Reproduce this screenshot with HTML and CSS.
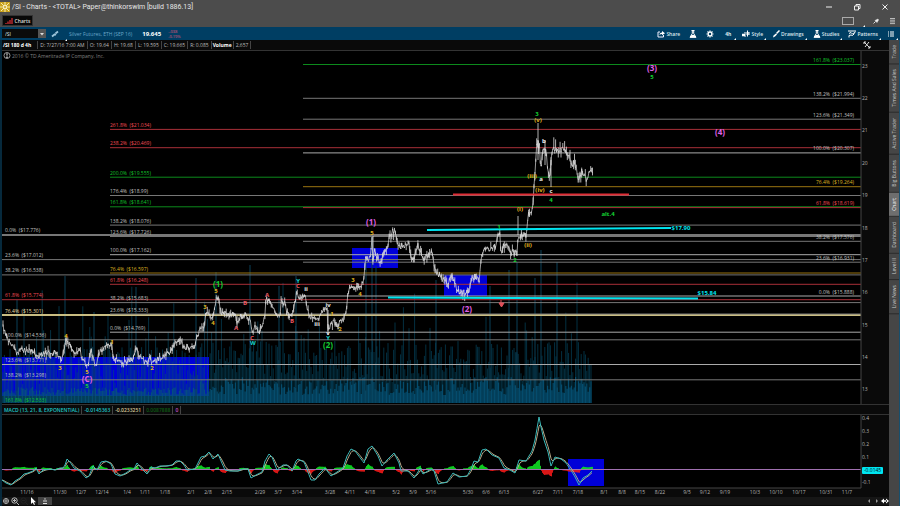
FILE: index.html
```html
<!DOCTYPE html>
<html lang="en">
<head>
<meta charset="utf-8">
<title>/SI - Charts</title>
<link rel="stylesheet" href="styles.css">
</head>
<body>
<header class="window-head">
  <div class="titlebar">
    <svg class="logo" viewBox="0 0 10 10"><rect width="10" height="10" fill="#c9a21e"/><g stroke="#f3e9b0" stroke-width="1"><path d="M5 0v10M0 5h10M1 1l8 8M9 1L1 9"/></g><circle cx="5" cy="5" r="2" fill="#f6efc4"/><circle cx="5" cy="5" r="1" fill="#c9a21e"/></svg>
    <h1>/SI - Charts - &lt;TOTAL&gt; Paper@thinkorswim [build 1886.13]</h1>
    <div class="window-buttons">
      <button aria-label="Minimize"><svg viewBox="0 0 8 8"><path d="M1 4h6"/></svg></button>
      <button aria-label="Restore"><svg viewBox="0 0 8 8"><path d="M1.500 3h4v4h-4zM3 3V1.500h4v4H5.500"/></svg></button>
      <button aria-label="Close"><svg viewBox="0 0 8 8"><path d="M1.500 1.500l5 5M6.500 1.500l-5 5"/></svg></button>
    </div>
  </div>
  <div class="tabbar">
    <button class="tab"><svg viewBox="0 0 8 8"><path d="M1 7V6M3 7V4.500M5 7V3M7 7V1" stroke="#c22a30" stroke-width="1.400"/></svg>Charts</button>
    <div class="tab-tools">
      <button class="frame more" aria-label="Layout"></button>
      <button aria-label="Pin"><svg viewBox="0 0 8 8"><path d="M1.500 6.500l2-2" stroke="#ddd"/><path d="M3 3.500L6 2l.5 1L5 5.500z" fill="#eee" stroke="#eee" stroke-width=".5"/></svg></button>
      <button aria-label="Panel menu"><svg viewBox="0 0 8 8"><path d="M2 1.500h5M2 3.200h5M2 4.900h5M2 6.600h5" stroke="#bbb"/></svg></button>
    </div>
  </div>
</header>
<nav class="toolbar">
  <div class="symbol"><input aria-label="Symbol" value="/SI"><button aria-label="Symbol list"><svg viewBox="0 0 8 8"><path d="M2 3h4L4 5.500z" fill="#ddd"/></svg></button></div>
  <button class="link more" aria-label="Link"><svg viewBox="0 0 8 8"><path d="M1 6.500l2.500-2M3 4l2 1M4.500 3.500L7 1.500" stroke="#9cc4da" stroke-width="1.800"/></svg></button>
  <span class="product">Silver Futures, ETH (SEP 16)</span>
  <strong class="last">19.645</strong>
  <span class="change"><span>-.038</span><span>-0.19%</span></span>
  <div class="actions">
    <button><svg viewBox="0 0 8 8"><path d="M3 2H1v5h5.500V5" stroke="#eef"/><path d="M2.500 5q0-2.500 2.500-2.500V1L8 3.200 5 5.300V4Q3.500 4 2.500 5z" fill="#fff"/></svg>Share</button>
    <button aria-label="Analyze"><svg viewBox="0 0 8 8"><path d="M2.500.5h3M3.300.5v3L1 7.300h6L4.700 3.500v-3" stroke="#fff"/><path d="M2.500 5h3L7 7.500H1z" fill="#fff"/></svg></button>
    <button aria-label="Settings"><svg viewBox="0 0 8 8"><path d="M4 .5v7M.5 4h7M1.500 1.500l5 5M6.500 1.500l-5 5" stroke="#fff" stroke-width="1.200"/><circle cx="4" cy="4" r="2.400" fill="#fff"/><circle cx="4" cy="4" r="1.200" fill="#003e63"/></svg></button>
    <button class="more period">4h</button>
    <button class="more"><svg viewBox="0 0 8 8"><path d="M1 3.500v3M3 2v5M5.500.5v6M7 2v3" stroke="#fff"/><path d="M4.500 2h2v3h-2zM0 4h3v2H0z" fill="#fff"/></svg>Style</button>
    <button class="more"><svg viewBox="0 0 8 8"><path d="M1 7.500l.5-2 2.500-2L5 4.500 3 6.500z" fill="#fff"/><path d="M4.500 3.500L7.500.5" stroke="#fff" stroke-width="1.500"/></svg>Drawings</button>
    <button class="more"><svg viewBox="0 0 8 8"><path d="M2.500.5h3M3.300.5v3L1 7.300h6L4.700 3.500v-3" stroke="#fff"/><path d="M2.500 5h3L7 7.500H1z" fill="#fff"/></svg>Studies</button>
    <button class="more"><svg viewBox="0 0 8 8"><path d="M0 1h8M1 3.500l2-1 1.500 1.500L7.500 2M1 7.500V5.500l2-.5 1.500.5 2-2" stroke="#fff"/></svg>Patterns</button>
    <button class="more" aria-label="Menu"><svg viewBox="0 0 8 8"><path d="M1 2h1M3 2h4M1 4h1M3 4h4M1 6h1M3 6h4" stroke="#fff"/></svg></button>
  </div>
</nav>
<div class="workspace">
  <main class="charts">
    <div class="strip">
      <b>/SI 180 d 4h</b><span>D: 7/27/16 7:00 AM</span><span>O: 19.64</span><span>H: 19.68</span><span>L: 19.595</span><span>C: 19.665</span><span>R: 0.085</span><b class="vol">Volume</b><span>2,657</span>
      <button class="scale" aria-label="Scale"><svg viewBox="0 0 8 8"><path d="M1 1l6 6M1 1h2M1 1v2M7 7V5M7 7H5M6 1L2 6" stroke="#ddd"/></svg></button>
    </div>
    <svg class="plot" id="price" viewBox="2 51 887 353" role="img" aria-label="Price chart"></svg>
    <div class="strip study">
      <span class="macd">MACD (13, 21, 8, EXPONENTIAL)</span><span class="macd">-0.0145363</span><span class="signal">-0.0233251</span><span class="diff">0.0087888</span><span class="zero">0</span>
    </div>
    <svg class="plot" id="macd" viewBox="2 415 887 82" role="img" aria-label="MACD study"></svg>
    <footer class="bottom">
      <button aria-label="Crosshair"><svg viewBox="0 0 8 8"><circle cx="4" cy="4" r="2.500" stroke="#aaa"/><path d="M4 1v6M1 4h6" stroke="#aaa"/></svg></button>
      <button aria-label="Zoom in"><svg viewBox="0 0 8 8"><circle cx="3.500" cy="3.500" r="2.700" stroke="#bbb"/><path d="M5.500 5.500L8 8M2 3.500h3M3.500 2v3" stroke="#bbb"/></svg></button>
      <button aria-label="Zoom out"><svg viewBox="0 0 8 8"><circle cx="3.500" cy="3.500" r="2.700" stroke="#222"/><path d="M5.500 5.500L8 8M2 3.500h3" stroke="#222"/></svg></button>
      <button aria-label="Pointer"><svg viewBox="0 0 8 8"><path d="M2 0v7l1.700-1.500L5 8l1-.5-1.200-2.300H7z" fill="#fff"/></svg></button>
      <button class="fit" aria-label="Fit"><svg viewBox="0 0 8 8"><path d="M2 4h4M2 6.500h4" stroke="#ddd"/><path d="M3 1.500h2L4 3z" fill="#ddd"/></svg></button>
      <div class="scroll">
        <button aria-label="Scroll left"><svg viewBox="0 0 8 8"><path d="M5 2L3 4l2 2z" fill="#999"/></svg></button>
        <button aria-label="Scroll right"><svg viewBox="0 0 8 8"><path d="M3 2l2 2-2 2z" fill="#999"/></svg></button>
        <button aria-label="Expand"><svg viewBox="0 0 8 8"><path d="M0 4l3-2.500v5zM8 4L5 1.500v5zM2 3.300h4v1.400H2z" fill="#fff"/></svg></button>
      </div>
    </footer>
  </main>
  <aside class="gadgets">
    <button>Trade</button><button>Times And Sales</button><button>Active Trader</button><button>Big Buttons</button><button class="on">Chart</button><button>Dashboard</button><button>Level II</button><button>Live News</button>
  </aside>
</div>
<script src="chart.js"></script>
</body>
</html>
```
FILE: styles.css
```css
* { box-sizing: border-box; }
body {
  margin: 0;
  min-height: 100vh;
  display: flex;
  flex-direction: column;
  background: #0a0a0a;
  color: #bcbcbc;
  font: 5px/8px "Open Sans", "Noto Sans", sans-serif;
}
button, input { font: inherit; color: inherit; background: none; border: 0; padding: 0; margin: 0; }
button { display: flex; align-items: center; justify-content: center; white-space: nowrap; }
button svg { width: 8px; height: 8px; fill: none; }

.window-head { background: #4c4c4c; }
.titlebar { display: flex; align-items: center; height: 14px; gap: 2px; }
.logo { width: 10px; height: 10px; }
.titlebar h1 { margin: 0; font-family: Roboto, "Open Sans", sans-serif; font-size: 7px; line-height: 14px; font-weight: 400; color: #e6e6e6; }
.window-buttons { margin-left: auto; display: flex; gap: 20px; padding-right: 11px; }
.window-buttons svg { stroke: #eee; stroke-width: 1; }
.tabbar { display: flex; height: 13px; align-items: center; justify-content: space-between; padding: 0 4px 0 2px; }
.tab { background: #080808; color: #ddd; height: 11px; width: 31px; gap: 2px; font-weight: 600; border: 1px solid #333; }
.tab-tools { display: flex; align-items: center; gap: 8px; }
.frame { width: 12px; height: 8px; border: 1px solid #aaa; margin-right: 10px; }

.toolbar { display: flex; align-items: center; height: 13px; padding: 0 5px 0 2px; background: #003e63; color: #dbe6ec; }
.symbol { display: flex; height: 9px; width: 44px; background: #0b0b0b; }
.symbol input { flex: 1; min-width: 0; padding-left: 3px; }
.symbol button { background: #555; width: 8px; }
.link { width: 18px; height: 13px; }
.more { position: relative; }
.more::after { content: ""; position: absolute; right: -3px; bottom: -1px; border: 1px solid; border-color: transparent #fff #fff transparent; }
.frame.more::after { right: -12px; bottom: -3px; }
.product { color: #6aa6c8; margin: 0 10px 0 5px; }
.last { font-size: 6px; color: #fff; }
.change { display: flex; flex-direction: column; color: #e0587a; margin-left: 7px; line-height: 5px; font-size: 4px; }
.actions { margin-left: auto; display: flex; align-items: center; font-weight: 600; gap: 9px; }
.actions button { gap: 1px; height: 11px; }
.actions .period { padding: 0 2px; font-weight: 700; }

.workspace { flex: 1; display: flex; }
.charts { flex: 1; min-width: 0; border-left: 2px solid #06293c; }
.strip { display: flex; align-items: center; height: 11px; border-bottom: 1px solid #333; background: #0a0a0a; }
.strip b, .strip span { padding: 0 2px; border-right: 1px solid #444; }
.strip b { color: #fff; padding-left: 1px; }
.strip b:first-child { padding-right: 6px; }
.strip .vol { padding-right: 1px; }
.scale { margin-left: auto; margin-right: 18px; }
.study { border-top: 1px solid #333; font-weight: 600; }
.strip .macd { color: #1fc9c9; }
.strip .signal { color: #d8cc9a; }
.strip .diff { color: #0d5a14; }
.strip .zero { color: #c04fc8; }
.plot { display: block; width: 100%; height: auto; font-size: 5px; }
.plot .mark { font-weight: 700; font-size: 6px; text-anchor: middle; }
.plot .big { font-size: 8px; }
.plot .mid { text-anchor: middle; }
.plot .end { text-anchor: end; }
.bottom { display: flex; align-items: center; height: 8px; background: #161616; gap: 1px; }
.fit { background: #444; width: 14px; height: 8px; }
.scroll { margin-left: auto; display: flex; }

.gadgets { width: 11px; background: #464646; border-right: 1px solid #17506e; display: flex; flex-direction: column; }
.gadgets button { writing-mode: vertical-rl; transform: rotate(180deg); width: 10px; padding: 5px 0; line-height: 10px; color: #ccc; border-top: 1px solid #2b2b2b; }
.gadgets .on { background: #6e6e6e; color: #fff; }
```
FILE: chart.js
```js
const NS = 'http://www.w3.org/2000/svg';
const price = document.getElementById('price');
const macd = document.getElementById('macd');

function add(root, name, attrs, text) {
  const el = document.createElementNS(NS, name);
  for (const k in attrs) el.setAttribute(k, attrs[k]);
  if (text) el.textContent = text;
  root.appendChild(el);
}
let seed = 11;
function rnd() { seed = (seed * 16807) % 2147483647; return seed / 2147483647; }
function pairs(s) { return s.trim().split(/\s+/).map(p => p.split(',').map(Number)); }
function at(pts, x) {
  if (x <= pts[0][0]) return pts[0][1];
  for (let i = 1; i < pts.length; i++) {
    if (x <= pts[i][0]) {
      const [a, b] = pts[i - 1], [c, d] = pts[i];
      return b + (d - b) * (x - a) / (c - a);
    }
  }
  return pts[pts.length - 1][1];
}
const yOf = p => 64.5 - (p - 23.037) * 32.38;

const GRAY = '#777', LIGHT = '#aaa', RED = '#a82f38', GREEN = '#0c8a1c', GOLD = '#9a7410', CREAM = '#c9bd82';

/* backgrounds */
add(price, 'rect', { x: 2, y: 51, width: 859, height: 353, fill: '#000' });
[[2, 357, 207, 39], [352, 248, 46, 20], [444, 275, 43, 21]].forEach(([x, y, width, height]) =>
  add(price, 'rect', { x, y, width, height, fill: '#0000d8' }));

/* volume */
let vol = '', low = '';
for (let x = 3; x < 592; x += 1.4) {
  const r = rnd();
  let h = 12 + rnd() * 42 + (x > 200 ? 8 : 0);
  if (r > 0.82) h = 50 + rnd() * 45;
  if (r > 0.965) h = 90 + rnd() * 40;
  vol += `M${x.toFixed(1)} 403v${-h.toFixed(1)}`;
  low += `M${x.toFixed(1)} 403v${-(8 + rnd() * (x > 200 ? 18 : 8)).toFixed(1)}`;
}
add(price, 'path', { d: vol, stroke: '#06506f', 'stroke-width': 0.8, opacity: 0.75 });
add(price, 'path', { d: low, stroke: '#06557a', 'stroke-width': 1.2, opacity: 0.8 });
[[17, 300], [65, 276], [94, 312], [136, 287], [196, 278], [216, 272], [250, 265], [279, 286], [296, 276], [366, 262], [372, 236], [376, 266], [436, 280], [490, 286], [509, 270], [517, 262], [535, 278], [541, 250], [557, 262]].forEach(([x, y]) =>
  add(price, 'path', { d: `M${x} 403V${y}`, stroke: '#0a4058', 'stroke-width': 1 }));

/* retracement levels: value, percent, line colour, thickness */
const sets = [
  { x: 2, lx: 5, rows: [[17.776, '0.0%', GRAY, 2], [17.012, '23.6%', GRAY, 1], [16.538, '38.2%', GRAY, 1], [15.774, '61.8%', RED, 1], [15.301, '76.4%', CREAM, 2], [14.536, '100.0%', GRAY, 1], [13.771, '123.6%', LIGHT, 1], [13.298, '138.2%', GRAY, 1], [12.533, '161.8%', GREEN, 0]] },
  { x: 110, lx: 110, rows: [[21.034, '261.8%', RED, 1], [20.469, '238.2%', RED, 1], [19.555, '200.0%', GREEN, 1], [18.99, '176.4%', GRAY, 1], [18.641, '161.8%', GREEN, 1], [18.076, '138.2%', GRAY, 1], [17.726, '123.6%', GRAY, 1], [17.162, '100.0%', LIGHT, 1], [16.597, '76.4%', GOLD, 1], [16.248, '61.8%', RED, 1], [15.683, '38.2%', GRAY, 1], [15.333, '23.6%', GRAY, 1], [14.769, '0.0%', LIGHT, 1]] },
  { x: 303, lx: 854, end: true, rows: [[23.037, '161.8%', GREEN, 1], [21.994, '138.2%', GRAY, 1], [21.349, '123.6%', GRAY, 1], [20.307, '100.0%', LIGHT, 1], [19.264, '76.4%', GOLD, 1], [18.619, '61.8%', RED, 1], [17.576, '38.2%', GRAY, 1], [16.931, '23.6%', GRAY, 1], [15.888, '0.0%', LIGHT, 1]] }
];
const textColor = { [RED]: '#f44c56', [GREEN]: '#12c42c', [GOLD]: '#deb422', [CREAM]: '#e8dea8' };
sets.forEach(s => s.rows.forEach(([v, pct, color, w]) => {
  const y = yOf(v);
  if (w) add(price, 'path', { d: `M${s.x} ${y.toFixed(1)}H861`, stroke: color, 'stroke-width': w });
  add(price, 'text', { x: s.lx, y: (y - 2.5).toFixed(1), fill: textColor[color] || '#c0c0c0', class: s.end ? 'end' : 'start' }, `${pct}\u00a0 ($${v})`);
}));

/* price bars */
const path = pairs(`2,322 4,330 7,335 9,343 13,345 17,352 22,350 28,351 34,351 38,359 43,353 50,354 54,351 58,355 61,361 64,348 66,338
69,344 73,352 78,351 80,349 82,358 86,366 88,366 91,350 93,356 95,366 97,362 98,352 103,349 108,346 111,344 113,355 116,360 120,361
125,363 130,360 134,358 136,347 139,357 143,361 148,363 150,355 151,362 156,361 160,357 165,356 170,352 175,345 178,339 180,341
184,348 190,348 195,347 197,338 200,329 204,328 206,313 208,316 211,316 213,319 214,312 216,300 219,299 220,309 222,314 232,315
236,316 237,324 240,316 245,315 250,320 252,335 255,327 257,327 259,332 262,325 265,314 266,300 270,300 273,306 277,316 280,315
281,303 285,303 287,313 290,317 292,316 295,303 297,290 299,297 301,300 305,293 307,306 309,317 315,318 320,317 325,308 327,310
328,331 331,323 334,322 337,325 341,322 344,318 346,310 348,295 350,287 353,287 356,289 358,286 363,284 365,263 366,258 370,260
372,240 373,260 375,250 377,261 381,260 384,252 387,250 389,240 392,231 395,232 398,243 400,246 404,246 409,244 411,260 415,256
418,243 420,252 423,259 427,256 431,251 433,258 435,270 438,275 444,280 448,283 452,276 456,286 460,293 465,293 469,292 471,279
475,276 479,281 481,262 483,250 487,250 491,249 495,247 498,237 500,234 501,253 504,245 508,245 512,252 517,254 518,236 522,234
525,236 526,237 528,218 529,212 531,214 533,205 534,188 536,160 537,140 538,150 539,142 541,170 542,155 544,145 546,155 548,168
550,178 551,160 553,145 555,154 557,147 560,152 562,147 566,155 570,159 573,163 576,168 578,183 580,176 582,168 585,178 587,180
589,172 592,175`);
let bars = '', trace = '';
for (let x = 3; x < 592.5; x += 0.9) {
  const amp = x > 534 ? 8 : x > 360 ? 6 : 5;
  const y = at(path, x) + (rnd() - 0.5) * amp;
  const up = rnd() * rnd() * amp * 1.3, down = rnd() * rnd() * amp * 1.3;
  bars += `M${x.toFixed(1)} ${(y - up).toFixed(1)}V${(y + down).toFixed(1)}`;
  trace += `${trace ? 'L' : 'M'}${x.toFixed(1)} ${y.toFixed(1)}`;
}
bars += 'M538 123V160M518 216V235M545 140V165M551 160V187M373 236V262M66 336V345M237 316V328M328 310V335';
add(price, 'path', { d: bars, stroke: '#dcdcdc', 'stroke-width': 0.8, fill: 'none' });
add(price, 'path', { d: trace, stroke: '#dcdcdc', 'stroke-width': 0.7, fill: 'none' });

/* drawn support lines */
add(price, 'path', { d: 'M453 194.500H629', stroke: '#e02c34', 'stroke-width': 2 });
add(price, 'path', { d: 'M427 230L671 228M388 297.500L698 298.500', stroke: '#00e5f0', 'stroke-width': 2 });
add(price, 'path', { d: 'M501 300v4M499 303h5l-2.500 4z', stroke: '#e0505a', fill: '#e0505a' });

/* wave labels: text, x, baseline, colour, large */
const M = '#e060e8', G = '#14d032', Y = '#e0b420', R = '#f05a64', W = '#eee', C = '#18d0d0';
[['(3)', 652, 71, M, 1], ['5', 652, 79, G], ['(4)', 720, 135, M, 1], ['3', 537, 116, G], ['(v)', 538, 122, Y], ['b', 544, 143, W],
 ['(iii)', 532, 178, Y], ['a', 541, 181, W], ['(iv)', 540, 192, Y], ['c', 551, 193, W], ['4', 551, 202, G], ['alt.4', 608, 216, G],
 ['(i)', 520, 211, Y], ['1', 499, 229, G], ['(ii)', 528, 247, Y], ['2', 515, 262, G], ['(1)', 371, 225, M, 1], ['5', 372, 235, Y],
 ['3', 353, 282, Y], ['4', 360, 296, Y], ['(2)', 467, 312, M, 1], ['$17.90', 681, 230, '#00e5f0'], ['$15.84', 707, 295, '#00e5f0'],
 ['(1)', 218, 287, G, 1], ['5', 216, 293, Y], ['3', 205, 309, Y], ['4', 213, 325, Y], ['B', 245, 305, R], ['A', 236, 330, R],
 ['C', 252, 340, R], ['W', 253, 345, C], ['A', 267, 297, R], ['B', 292, 323, R], ['Y', 298, 283, C], ['C', 298, 288, R],
 ['ii', 306, 291, W], ['iii', 317, 326, W], ['iv', 328, 307, W], ['v', 328, 335, W], ['Y', 328, 340, C], ['(2)', 328, 348, G, 1],
 ['1', 332, 316, Y], ['2', 340, 331, Y], ['4', 66, 338, Y], ['3', 60, 370, Y], ['5', 87, 374, Y], ['(C)', 87, 382, M, 1], ['5', 87, 388, G],
 ['1', 112, 344, Y], ['2', 152, 370, Y]
].forEach(([t, x, y, fill, big]) => add(price, 'text', { x, y, fill, class: big ? 'mark big' : 'mark' }, t));
add(price, 'circle', { cx: 7, cy: 55.5, r: 3, fill: 'none', stroke: '#bbb', 'stroke-width': 0.8 });
add(price, 'path', { d: 'M7 53.500v4M6 54h2M6 57.500h2', stroke: '#bbb', 'stroke-width': 0.8 });
add(price, 'text', { x: 12, y: 58, fill: '#808080' }, '2016 © TD Ameritrade IP Company, Inc.');

/* price axis */
add(price, 'rect', { x: 861, y: 51, width: 28, height: 353, fill: '#0a0a0a' });
add(price, 'path', { d: 'M861 51V404', stroke: '#444' });
for (let p = 13; p < 24; p++) add(price, 'text', { x: 862, y: Math.round(yOf(p) + 2), fill: '#b4b4b4' }, String(p));

/* MACD pane */
const line = pairs(`2,480 6,483 11,485 15,481 20,478 24,474 28,473 33,471 36,468 39,474 43,470 50,469 55,470 60,468 63,468 65,465 67,459
70,462 74,468 80,471 86,478 89,476 93,466 97,470 101,462 106,461 111,464 115,474 120,476 126,473 130,470 134,469 137,463 142,469
147,474 151,467 155,468 160,466 166,466 172,465 176,461 180,461 184,465 187,470 195,469 198,463 201,457 205,456 209,452 213,459
218,454 221,461 225,470 230,471 238,471 243,469 248,469 251,478 256,475 262,472 265,461 269,454 272,457 277,470 283,465 287,465
292,471 296,461 298,459 304,462 308,472 311,480 315,480 319,474 325,468 331,476 337,472 343,468 347,456 351,449 355,451 364,463
368,449 372,446 378,456 382,466 387,460 394,453 399,463 401,471 408,471 414,478 418,472 420,468 423,474 431,469 434,471 438,484
447,482 453,473 459,477 467,476 471,469 474,461 478,462 482,450 486,449 492,455 499,458 504,468 510,470 515,473 519,460 526,461
532,451 535,440 539,417 541,427 544,440 548,452 551,466 555,457 561,459 566,463 572,472 575,477 579,485 583,478 588,475 592,471`);
add(macd, 'rect', { x: 2, y: 415, width: 859, height: 73, fill: '#000' });
add(macd, 'rect', { x: 568, y: 459, width: 36, height: 27, fill: '#0000d8' });
let sig = at(line, 2), up = '', down = '', a = '', b = '';
for (let x = 2; x <= 592; x++) {
  const y = at(line, x);
  sig += (y - sig) * 0.36;
  a += `${a ? 'L' : 'M'}${x} ${y.toFixed(1)}`;
  b += `${b ? 'L' : 'M'}${x} ${sig.toFixed(1)}`;
  const h = (sig - y) * 0.9;
  if (h > 0) up += `M${x + 0.5} 469v${-(h + 0.6).toFixed(1)}`;
  else down += `M${x + 0.5} 469v${(-h + 0.6).toFixed(1)}`;
}
add(macd, 'path', { d: up, stroke: '#10e024', 'stroke-width': 0.9 });
add(macd, 'path', { d: down, stroke: '#f01818', 'stroke-width': 0.9 });
add(macd, 'path', { d: 'M2 469.500H861', stroke: '#a070b0', 'stroke-width': 1 });
add(macd, 'path', { d: b, stroke: '#b8a888', fill: 'none' });
add(macd, 'path', { d: a, stroke: '#3ab8b8', fill: 'none' });
add(macd, 'path', { d: 'M2 488H861V415', stroke: '#444', fill: 'none' });
[['0.4', 418], ['0.3', 431], ['0.2', 444], ['0.1', 457], ['-0.1', 482]].forEach(([t, y]) =>
  add(macd, 'text', { x: 862, y: y + 2, fill: '#b4b4b4' }, t));
add(macd, 'rect', { x: 862, y: 467, width: 21, height: 7, rx: 1, fill: '#00e5f0' });
add(macd, 'text', { x: 864, y: 472, fill: '#012' }, '-0.0145');
`11/16,27 11/30,60 12/7,81 12/14,102 1/4,127 1/11,145 1/18,165 2/1,191 2/8,208 2/15,227 2/29,260 3/7,278 3/14,297 3/28,330 4/11,350
4/18,370 5/2,396 5/9,413 5/16,431 5/30,468 6/6,486 6/13,504 6/27,538 7/11,558 7/18,578 8/1,604 8/8,622 8/15,640 8/22,660 9/5,687
9/12,705 9/19,725 10/3,755 10/10,776 10/17,799 10/31,826 11/7,847`.split(/\s+/).forEach(s => {
  const [t, x] = s.split(',');
  add(macd, 'text', { x, y: 494, fill: '#b4b4b4', class: 'mid' }, t);
});
```
